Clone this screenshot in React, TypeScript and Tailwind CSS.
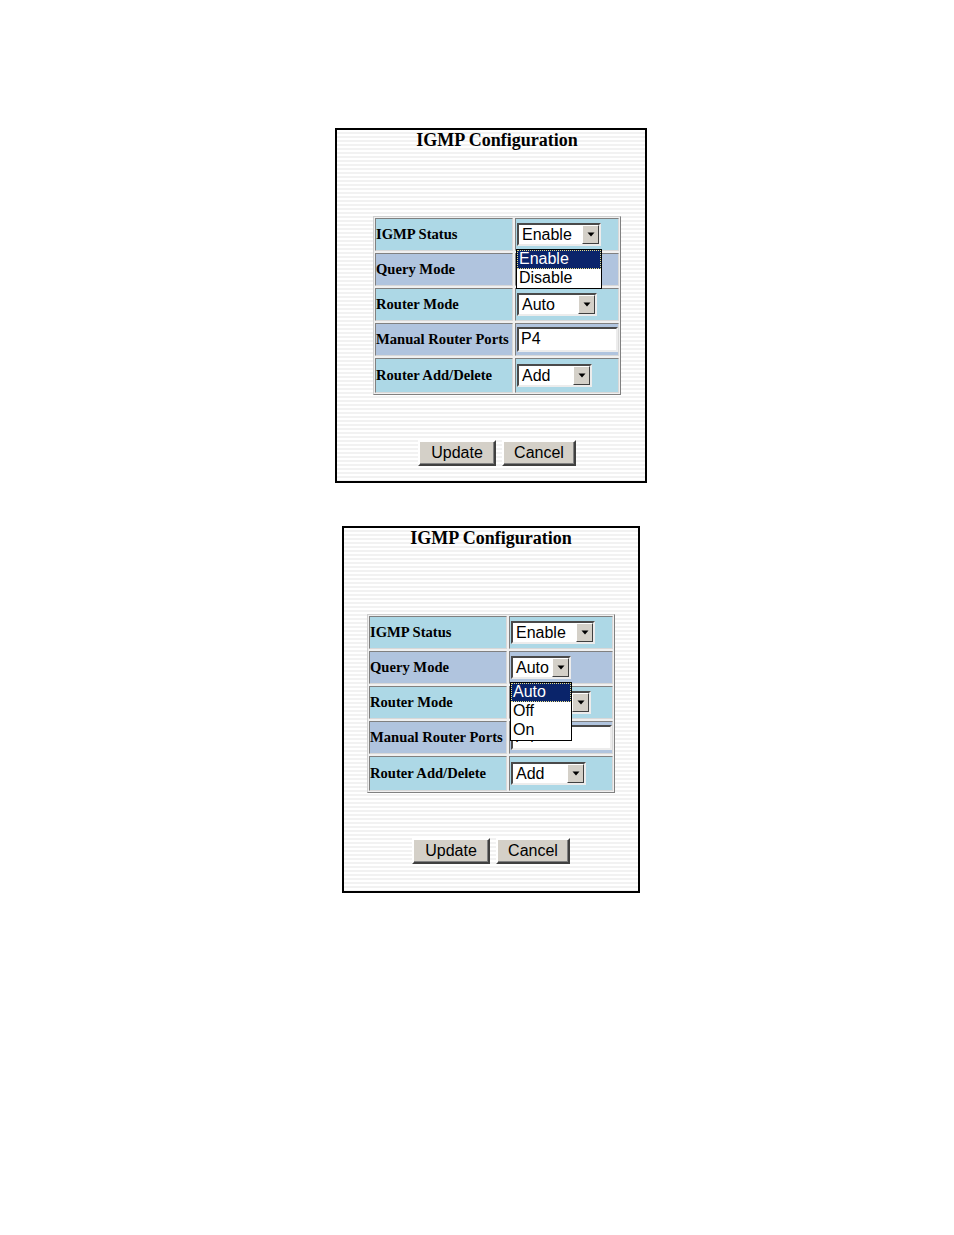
import React from "react";

const SERIF = "font-['Liberation_Serif','Times_New_Roman',serif]";
const SANS = "font-['Liberation_Sans',Arial,sans-serif]";
const STRIPES =
  "bg-[repeating-linear-gradient(to_bottom,#ffffff_0px,#ffffff_2px,#f2f2f2_2px,#f2f2f2_4px)]";

function Arrow() {
  return (
    <div className="w-[17px] h-full bg-[#d4d0c8] border border-t-white border-l-white border-b-[#404040] border-r-[#404040] flex items-center justify-center shrink-0">
      <svg width="8" height="5" viewBox="0 0 8 5">
        <path d="M0.5 0.5h7L4 4.5z" fill="#000" />
      </svg>
    </div>
  );
}

type Opt = { label: string; active?: boolean };

function Select({
  value,
  width,
  options,
}: {
  value: string;
  width: string;
  options?: Opt[];
}) {
  return (
    <div className={`relative ${width}`}>
      <div className="h-[23px] flex border-2 border-t-[#4a4a4a] border-l-[#4a4a4a] border-b-[#ececec] border-r-[#ececec] bg-white">
        <div className={`flex-1 ${SANS} text-[16px] leading-[19px] text-black pl-[3px] overflow-hidden whitespace-nowrap`}>
          {value}
        </div>
        <Arrow />
      </div>
      {options && (
        <div className="absolute left-[-1px] right-[-1px] top-[26px] z-20 bg-white border border-black">
          {options.map((o) => (
            <div
              key={o.label}
              className={`h-[19px] ${SANS} text-[16px] leading-[18px] pl-[2px] ${
                o.active
                  ? "bg-[#0a246a] text-white outline-1 outline-dotted outline-[#e8e08a] -outline-offset-1"
                  : "text-black"
              }`}
            >
              {o.label}
            </div>
          ))}
        </div>
      )}
    </div>
  );
}

function TextInput({ value }: { value: string }) {
  return (
    <div className="w-[101px] h-[25px] border-2 border-t-[#4a4a4a] border-l-[#4a4a4a] border-b-[#ececec] border-r-[#ececec] bg-white">
      <div className={`${SANS} text-[16px] leading-[20px] pl-[2px] text-black`}>{value}</div>
    </div>
  );
}

function Button({ label, width }: { label: string; width: string }) {
  return (
    <button
      className={`${width} h-[26px] bg-[#d4d0c8] border-2 border-t-white border-l-white border-b-[#404040] border-r-[#404040] shadow-[inset_-1px_-1px_0_#808080] ${SANS} text-[16px] leading-none text-black`}
    >
      {label}
    </button>
  );
}

type Row = { label: string; bg: string; field: React.ReactNode; last?: boolean };

function Panel({
  width,
  innerPad,
  bottomPad,
  open,
}: {
  width: string;
  innerPad: string;
  bottomPad: string;
  open: "status" | "query";
}) {
  const rows: Row[] = [
    {
      label: "IGMP Status",
      bg: "bg-[#add8e6]",
      field: (
        <Select
          value="Enable"
          width="w-[84px]"
          options={
            open === "status"
              ? [{ label: "Enable", active: true }, { label: "Disable" }]
              : undefined
          }
        />
      ),
    },
    {
      label: "Query Mode",
      bg: "bg-[#b0c4de]",
      // the open status list covers this select in the first panel
      field:
        open === "status" ? null : (
          <Select
            value="Auto"
            width="w-[60px]"
            options={[{ label: "Auto", active: true }, { label: "Off" }, { label: "On" }]}
          />
        ),
    },
    {
      label: "Router Mode",
      bg: "bg-[#add8e6]",
      field: <Select value="Auto" width="w-[80px]" />,
    },
    {
      label: "Manual Router Ports",
      bg: "bg-[#b0c4de]",
      field: <TextInput value="P4" />,
    },
    {
      label: "Router Add/Delete",
      bg: "bg-[#add8e6]",
      field: <Select value="Add" width="w-[75px]" />,
      last: true,
    },
  ];

  return (
    <div className={`${width} border-2 border-black ${STRIPES} ${innerPad} ${bottomPad} flex flex-col items-center`}>
      <div className={`${SERIF} font-bold text-[18px] leading-[20px] text-black`}>
        IGMP Configuration
      </div>

      <div className="mt-[66px] w-[248px] border border-t-[#d0d0d0] border-l-[#d0d0d0] border-b-[#808080] border-r-[#808080] bg-[#f0f0f0] p-[1px] grid grid-cols-[138px_104px] gap-[2px]">
        {rows.map((r) => (
          <React.Fragment key={r.label}>
            <div
              className={`${r.bg} ${r.last ? "h-[35px]" : "h-[33px]"} border border-t-[#808080] border-l-[#808080] border-b-[#d8d8d8] border-r-[#d8d8d8] flex items-center pl-[0px] ${SERIF} font-bold text-[14.6px] text-black whitespace-nowrap`}
            >
              {r.label}
            </div>
            <div
              className={`${r.bg} ${r.last ? "h-[35px]" : "h-[33px]"} border border-t-[#808080] border-l-[#808080] border-b-[#d8d8d8] border-r-[#d8d8d8] flex items-center pl-[1px]`}
            >
              {r.field}
            </div>
          </React.Fragment>
        ))}
      </div>

      <div className="mt-[45px] flex gap-[6px]">
        <Button label="Update" width="w-[78px]" />
        <Button label="Cancel" width="w-[74px]" />
      </div>
    </div>
  );
}

export default function App() {
  return (
    <div className="w-[954px] h-[1235px] bg-white pt-[128px] pl-[28px] flex flex-col items-center">
      <Panel width="w-[312px]" innerPad="pl-[12px]" bottomPad="pb-[15px]" open="status" />
      <div className="h-[43px]" />
      <Panel width="w-[298px]" innerPad="pl-0" bottomPad="pb-[27px]" open="query" />
    </div>
  );
}
